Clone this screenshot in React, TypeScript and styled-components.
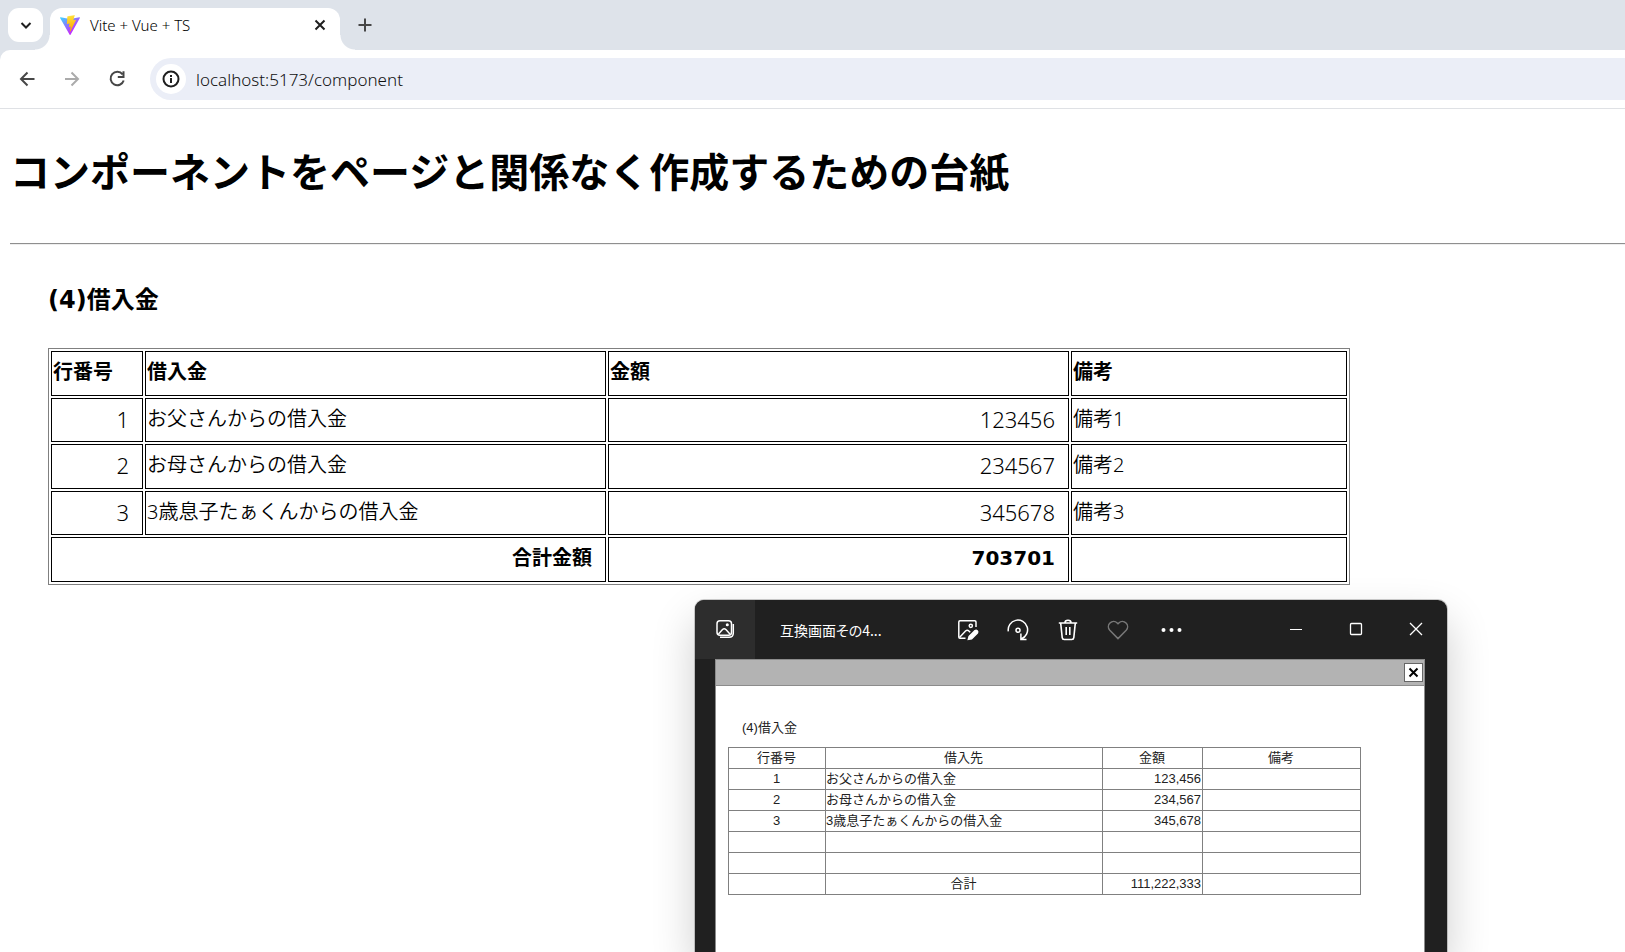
import React from "react";
import styled, { createGlobalStyle } from "styled-components";

const GlobalStyle = createGlobalStyle`
  *, *::before, *::after { box-sizing: border-box; }
  body {
    margin: 0;
    background: #fff;
    color: #000;
    font-family: "DejaVu Sans", "Noto Sans CJK JP", sans-serif;
  }
  button { border: 0; padding: 0; background: none; font: inherit; color: inherit; }
`;

/* ---------- browser chrome ---------- */

const Page = styled.div`
  position: relative;
  min-height: 100vh;
  overflow: hidden;
`;

const TabStrip = styled.div`
  display: flex;
  align-items: flex-start;
  height: 50px;
  padding: 8px 8px 0;
  background: #dee3ea;
`;

const IconButton = styled.button<{ $size?: number; $color?: string }>`
  display: flex;
  flex: none;
  align-items: center;
  justify-content: center;
  width: ${(p) => p.$size ?? 34}px;
  height: ${(p) => p.$size ?? 34}px;
  color: ${(p) => p.$color ?? "#474747"};
`;

const TabSearch = styled(IconButton)`
  width: 35px;
  margin-right: 7px;
  border-radius: 11px;
  background: #fff;
`;

const Tab = styled.div`
  position: relative;
  display: flex;
  align-items: center;
  width: 290px;
  height: 42px;
  padding: 0 10px 8px;
  border-radius: 12px 12px 0 0;
  background: #fff;

  &::before, &::after {
    content: "";
    position: absolute;
    bottom: 0;
    width: 15px;
    height: 15px;
  }
  &::before {
    left: -15px;
    background: radial-gradient(circle at 0 0, transparent 14px, #fff 15px);
  }
  &::after {
    right: -15px;
    background: radial-gradient(circle at 100% 0, transparent 14px, #fff 15px);
  }
`;

const TabTitle = styled.span`
  flex: 1;
  padding-left: 10px;
  font: 300 15px/20px "Noto Sans", sans-serif;
  color: #000;
`;

const NewTab = styled(IconButton)`
  margin-left: 8px;
`;

const ToolbarBack = styled.div`
  background: #dee3ea;
`;

const Toolbar = styled.div`
  display: flex;
  align-items: center;
  height: 59px;
  padding-left: 10px;
  border-bottom: 1px solid #dfe1e5;
  border-top-left-radius: 10px;
  background: #fff;
`;

const NavButtons = styled.div`
  display: flex;
  gap: 11px;
  margin-right: 16px;
`;

const AddressBar = styled.div`
  display: flex;
  flex: 1;
  align-items: center;
  height: 42px;
  padding-left: 6px;
  border-radius: 21px 0 0 21px;
  background: #ebeef7;
`;

const SiteInfo = styled(IconButton)`
  border-radius: 50%;
  background: #fff;
`;

const AddressInput = styled.input`
  flex: 1;
  min-width: 0;
  margin-left: 10px;
  padding: 2px 0 0;
  border: 0;
  outline: 0;
  background: none;
  font: 300 17px/24px "Noto Sans", sans-serif;
  color: #111;
`;

/* ---------- page content ---------- */

const Main = styled.main`
  padding-left: 10px;
`;

const Title = styled.h1`
  margin: 0;
  padding: 34px 0 40px;
  font-size: 40px;
  line-height: 60px;
  white-space: nowrap;
`;

const Rule = styled.hr`
  height: 2px;
  margin: 0;
  border: 0;
  border-top: 1px solid #8f8f8f;
  background: #eee;
`;

const Section = styled.section`
  padding: 39px 38px 0;
`;

const SectionTitle = styled.h3`
  margin: 0 0 31px;
  font-size: 24px;
  line-height: 33px;
`;

const LoanTable = styled.table`
  width: 100%;
  max-width: 1302px;
  table-layout: fixed;
  border: 1px solid #808080;
  border-collapse: separate;
  border-spacing: 2px;
  font-size: 20px;
  line-height: 30px;

  tr { height: 45px; }
  tr:nth-child(even) { height: 44px; }
`;

const Column = styled.col<{ $width?: number }>`
  width: ${(p) => (p.$width ? `${p.$width}px` : "auto")};
`;

const Cell = styled.td<{ $number?: boolean }>`
  padding: ${(p) => (p.$number ? "0 13px 3px 1px" : "0 1px 3px")};
  border: 1px solid #000;
  text-align: ${(p) => (p.$number ? "right" : "left")};
  font-family: "Noto Sans", "Noto Sans CJK JP", sans-serif;
  font-size: ${(p) => (p.$number ? 22 : 20)}px;
  font-weight: 350;
`;

const HeadCell = styled(Cell)`
  font-family: "DejaVu Sans", "Noto Sans CJK JP", sans-serif;
  font-size: 20px;
  font-weight: 700;
`;

/* ---------- floating photo viewer ---------- */

const Viewer = styled.section`
  position: absolute;
  top: 600px;
  bottom: 0;
  left: 695px;
  display: flex;
  flex-direction: column;
  width: 752px;
  border-radius: 9px 9px 0 0;
  overflow: hidden;
  background: #202020;
  color: #fff;
`;

const ViewerShadow = styled.div`
  position: absolute;
  top: 600px;
  bottom: 0;
  left: 695px;
  width: 752px;
  border-radius: 9px 9px 0 0;
  box-shadow: 0 0 0 1px rgba(90, 90, 90, 0.3), 0 20px 44px rgba(0, 0, 0, 0.2);
`;

const ViewerBar = styled.header`
  display: flex;
  flex: none;
  align-items: center;
  height: 59px;
`;

const ViewerApp = styled.button`
  display: flex;
  align-items: center;
  justify-content: center;
  width: 60px;
  height: 59px;
  padding-bottom: 2px;
  background: #2d2d2d;
`;

const ViewerName = styled.span`
  flex: 1;
  padding-left: 25px;
  font-family: "Noto Sans CJK JP", sans-serif;
  font-size: 14px;
  font-feature-settings: "palt";
  line-height: 22px;
  white-space: nowrap;
`;

const ViewerTools = styled.div`
  display: flex;
  gap: 16px;
  margin-right: 94px;
`;

const WindowButtons = styled.div`
  display: flex;
  gap: 26px;
  margin-right: 14px;
  padding-bottom: 2px;
`;

const Photo = styled.div`
  flex: 1;
  margin: 0 22px 0 20px;
  border: solid #8c8c8c;
  border-width: 0 1px;
  background: #fff;
  color: #222;
  font-family: "Liberation Sans", "Noto Sans CJK JP", sans-serif;
  font-size: 13px;
  line-height: 20px;
`;

const PhotoBar = styled.div`
  display: flex;
  align-items: center;
  justify-content: flex-end;
  height: 27px;
  padding-right: 1px;
  border: solid #8c8c8c;
  border-width: 1px 0;
  background: #b3b3b3;
`;

const PhotoClose = styled(IconButton)`
  border: 1px solid #666;
  background: #fff;
`;

const PhotoBody = styled.div`
  padding: 32px 12px 0;
`;

const PhotoTitle = styled.p`
  margin: 0 0 9px;
  padding-left: 14px;
`;

const PhotoTable = styled.table`
  width: 633px;
  table-layout: fixed;
  border-collapse: collapse;

  tr { height: 21px; }
  th, td {
    padding: 0 1px 0 0;
    border: 1px solid #808080;
    font-weight: 400;
    line-height: 20px;
  }
`;

const PhotoCell = styled.td<{ $align?: string }>`
  text-align: ${(p) => p.$align ?? "left"};
`;

/* ---------- icons ---------- */

type GlyphProps = { size?: number; stroke?: number; children: React.ReactNode };

const Glyph = ({ size = 24, stroke = 2, children }: GlyphProps) => (
  <svg
    width={size}
    height={size}
    viewBox={`0 0 ${size} ${size}`}
    fill="none"
    stroke="currentColor"
    strokeWidth={stroke}
    aria-hidden="true"
  >
    {children}
  </svg>
);

const ViteLogo = () => (
  <svg width="20" height="20" viewBox="0 0 256 257" aria-hidden="true">
    <defs>
      <linearGradient id="cone" x1="-.828%" x2="57.636%" y1="7.652%" y2="78.411%">
        <stop offset="0%" stopColor="#41D1FF" />
        <stop offset="100%" stopColor="#BD34FE" />
      </linearGradient>
      <linearGradient id="bolt" x1="43.376%" x2="50.316%" y1="2.242%" y2="89.03%">
        <stop offset="0%" stopColor="#FFEA83" />
        <stop offset="8.333%" stopColor="#FFDD35" />
        <stop offset="100%" stopColor="#FFA800" />
      </linearGradient>
    </defs>
    <path
      fill="url(#cone)"
      d="M255.153 37.938L134.897 252.976c-2.483 4.44-8.862 4.466-11.382.048L.875 37.958c-2.746-4.814 1.371-10.646 6.827-9.67l120.385 21.517a6.537 6.537 0 0 0 2.322-.004l117.867-21.483c5.438-.991 9.574 4.796 6.877 9.62Z"
    />
    <path
      fill="url(#bolt)"
      d="M185.432.063L96.44 17.501a3.268 3.268 0 0 0-2.634 3.014l-5.474 92.456a3.268 3.268 0 0 0 3.997 3.378l24.777-5.718c2.318-.535 4.413 1.507 3.936 3.838l-7.361 36.047c-.495 2.426 1.782 4.5 4.151 3.78l15.304-4.649c2.372-.72 4.652 1.36 4.15 3.788l-11.698 56.621c-.732 3.542 3.979 5.473 5.943 2.437l1.313-2.028l72.516-144.72c1.215-2.423-.88-5.186-3.54-4.672l-25.505 4.922c-2.396.462-4.435-1.77-3.759-4.114l16.646-57.705c.677-2.35-1.37-4.583-3.769-4.113Z"
    />
  </svg>
);

/* ---------- data ---------- */

const loans = [
  { no: 1, name: "お父さんからの借入金", amount: 123456, note: "備考1" },
  { no: 2, name: "お母さんからの借入金", amount: 234567, note: "備考2" },
  { no: 3, name: "3歳息子たぁくんからの借入金", amount: 345678, note: "備考3" },
];

const total = loans.reduce((sum, loan) => sum + loan.amount, 0);

const photoRows = [
  ["1", "お父さんからの借入金", "123,456"],
  ["2", "お母さんからの借入金", "234,567"],
  ["3", "3歳息子たぁくんからの借入金", "345,678"],
  ["", "", ""],
  ["", "", ""],
];

const BrowserChrome = () => (
  <header>
    <TabStrip>
      <TabSearch aria-label="タブを検索" $color="#1f1f1f">
        <Glyph size={20}><path d="M5.5 8 10 12.5 14.5 8" /></Glyph>
      </TabSearch>
      <Tab>
        <ViteLogo />
        <TabTitle>Vite + Vue + TS</TabTitle>
        <IconButton $size={20} $color="#1f1f1f" aria-label="タブを閉じる">
          <Glyph size={20}><path d="m5.5 5.5 9 9m0-9-9 9" /></Glyph>
        </IconButton>
      </Tab>
      <NewTab aria-label="新しいタブ">
        <Glyph size={20}><path d="M10 3.5v13M3.5 10h13" /></Glyph>
      </NewTab>
    </TabStrip>
    <ToolbarBack>
      <Toolbar>
        <NavButtons>
          <IconButton aria-label="戻る">
            <Glyph size={20}><path d="M17.5 10H4.5M10.5 3.5 4 10l6.5 6.5" /></Glyph>
          </IconButton>
          <IconButton aria-label="進む" $color="#ababab">
            <Glyph size={20}><path d="M3 10h12.5M9.5 3.5 16 10l-6.5 6.5" /></Glyph>
          </IconButton>
          <IconButton aria-label="再読み込み">
            <Glyph size={20}>
              <path d="M15.6 5.4A6.7 6.7 0 1 0 16.7 11.5M16.5 2.3V8H10.8" />
            </Glyph>
          </IconButton>
        </NavButtons>
        <AddressBar>
          <SiteInfo $size={30} $color="#1f1f1f" aria-label="サイト情報">
            <Glyph size={20}>
              <circle cx="10" cy="10" r="7.5" />
              <path d="M10 9v5M10 6v2" />
            </Glyph>
          </SiteInfo>
          <AddressInput aria-label="アドレス" defaultValue="localhost:5173/component" />
        </AddressBar>
      </Toolbar>
    </ToolbarBack>
  </header>
);

const LoanSection = () => (
  <Section>
    <SectionTitle>(4)借入金</SectionTitle>
    <LoanTable>
      <colgroup>
        <Column $width={92} />
        <Column />
        <Column />
        <Column $width={276} />
      </colgroup>
      <tbody>
        <tr>
          <HeadCell as="th">行番号</HeadCell>
          <HeadCell as="th">借入金</HeadCell>
          <HeadCell as="th">金額</HeadCell>
          <HeadCell as="th">備考</HeadCell>
        </tr>
        {loans.map((loan) => (
          <tr key={loan.no}>
            <Cell $number>{loan.no}</Cell>
            <Cell>{loan.name}</Cell>
            <Cell $number>{loan.amount}</Cell>
            <Cell>{loan.note}</Cell>
          </tr>
        ))}
        <tr>
          <HeadCell as="th" colSpan={2} $number>合計金額</HeadCell>
          <HeadCell $number>{total}</HeadCell>
          <Cell />
        </tr>
      </tbody>
    </LoanTable>
  </Section>
);

const PhotoViewer = () => (
  <>
    <ViewerShadow />
    <Viewer aria-label="フォト">
      <ViewerBar>
        <ViewerApp aria-label="すべての写真">
          <Glyph size={20} stroke={1.5}>
            <rect x="2" y="1.7" width="14.5" height="14.5" rx="3" />
            <path d="m3.5 15 4-4.5q1.7-1.5 3.4 0l4 4.5" />
            <circle cx="12.3" cy="5.8" r=".8" fill="currentColor" />
            <path d="M18.3 5v9q0 4.3-4.3 4.3H5" />
          </Glyph>
        </ViewerApp>
        <ViewerName>互換画面その4...</ViewerName>
        <ViewerTools>
          <IconButton aria-label="編集" $color="#fff">
            <Glyph size={24} stroke={1.5}>
              <path d="M9.5 20.3H4q-1.2 0-1.2-1.2V4q0-1.2 1.2-1.2h14.8Q20 2.8 20 4v5" />
              <path d="m3.5 19.5 6-6.5q1.7-1.5 3.4 0l1.3 1.3" />
              <circle cx="14.8" cy="7.8" r="1.6" />
              <path d="m12.4 21.3.8-3 5.8-5.6q1.2-.8 2.2.2t.2 2.2l-5.8 5.6Z" fill="currentColor" />
            </Glyph>
          </IconButton>
          <IconButton aria-label="回転" $color="#fff">
            <Glyph size={24} stroke={1.5}>
              <path d="M2.3 13.3A9.7 9.7 0 1 1 15.3 20.9M14.9 15.4v6h5.6" />
              <circle cx="12" cy="12.3" r="2" />
            </Glyph>
          </IconButton>
          <IconButton aria-label="削除" $color="#fff">
            <Glyph size={24} stroke={1.6}>
              <path d="M2.8 5h18.4M9 4.8q0-2.5 3-2.5t3 2.5M4.7 5.2l1.5 14.5q.2 1.8 2 1.8h7.6q1.800 0 2-1.800l1.500-14.500M10.200 9v8M13.800 9v8" />
            </Glyph>
          </IconButton>
          <IconButton aria-label="お気に入り" $color="#777">
            <Glyph size={24} stroke={1.5}>
              <path d="M12 20.6 3.8 12.3a5.2 5.2 0 0 1 7.4-7.3l.8.8.8-.8a5.2 5.2 0 0 1 7.4 7.3Z" />
            </Glyph>
          </IconButton>
          <IconButton aria-label="その他" $color="#fff">
            <Glyph size={28}>
              <g fill="currentColor" stroke="none">
                <circle cx="9.500" cy="14" r="2" />
                <circle cx="17.500" cy="14" r="2" />
                <circle cx="25.500" cy="14" r="2" />
              </g>
            </Glyph>
          </IconButton>
        </ViewerTools>
        <WindowButtons>
          <IconButton $color="#fff" aria-label="最小化">
            <Glyph size={16} stroke={1}><path d="M2 8.5h12" /></Glyph>
          </IconButton>
          <IconButton $color="#fff" aria-label="最大化">
            <Glyph size={16} stroke={1.3}><rect x="2.5" y="2.5" width="11" height="11" rx="1" /></Glyph>
          </IconButton>
          <IconButton $color="#fff" aria-label="閉じる">
            <Glyph size={16} stroke={1.3}><path d="m2 2 12 12M14 2 2 14" /></Glyph>
          </IconButton>
        </WindowButtons>
      </ViewerBar>
      <Photo>
        <PhotoBar>
          <PhotoClose $size={19} $color="#000" aria-label="画像を閉じる">
            <Glyph size={13} stroke={2}><path d="m2.5 2.5 8 8m0-8-8 8" /></Glyph>
          </PhotoClose>
        </PhotoBar>
        <PhotoBody>
          <PhotoTitle>(4)借入金</PhotoTitle>
          <PhotoTable>
            <colgroup>
              <Column $width={97} />
              <Column />
              <Column $width={100} />
              <Column $width={158} />
            </colgroup>
            <thead>
              <tr>
                <th>行番号</th>
                <th>借入先</th>
                <th>金額</th>
                <th>備考</th>
              </tr>
            </thead>
            <tbody>
              {photoRows.map(([no, name, amount], index) => (
                <tr key={index}>
                  <PhotoCell $align="center">{no}</PhotoCell>
                  <PhotoCell>{name}</PhotoCell>
                  <PhotoCell $align="right">{amount}</PhotoCell>
                  <PhotoCell />
                </tr>
              ))}
              <tr>
                <PhotoCell />
                <PhotoCell $align="center">合計</PhotoCell>
                <PhotoCell $align="right">111,222,333</PhotoCell>
                <PhotoCell />
              </tr>
            </tbody>
          </PhotoTable>
        </PhotoBody>
      </Photo>
    </Viewer>
  </>
);

export default function App() {
  return (
    <Page>
      <GlobalStyle />
      <BrowserChrome />
      <Main>
        <Title>コンポーネントをページと関係なく作成するための台紙</Title>
        <Rule />
        <LoanSection />
      </Main>
      <PhotoViewer />
    </Page>
  );
}
